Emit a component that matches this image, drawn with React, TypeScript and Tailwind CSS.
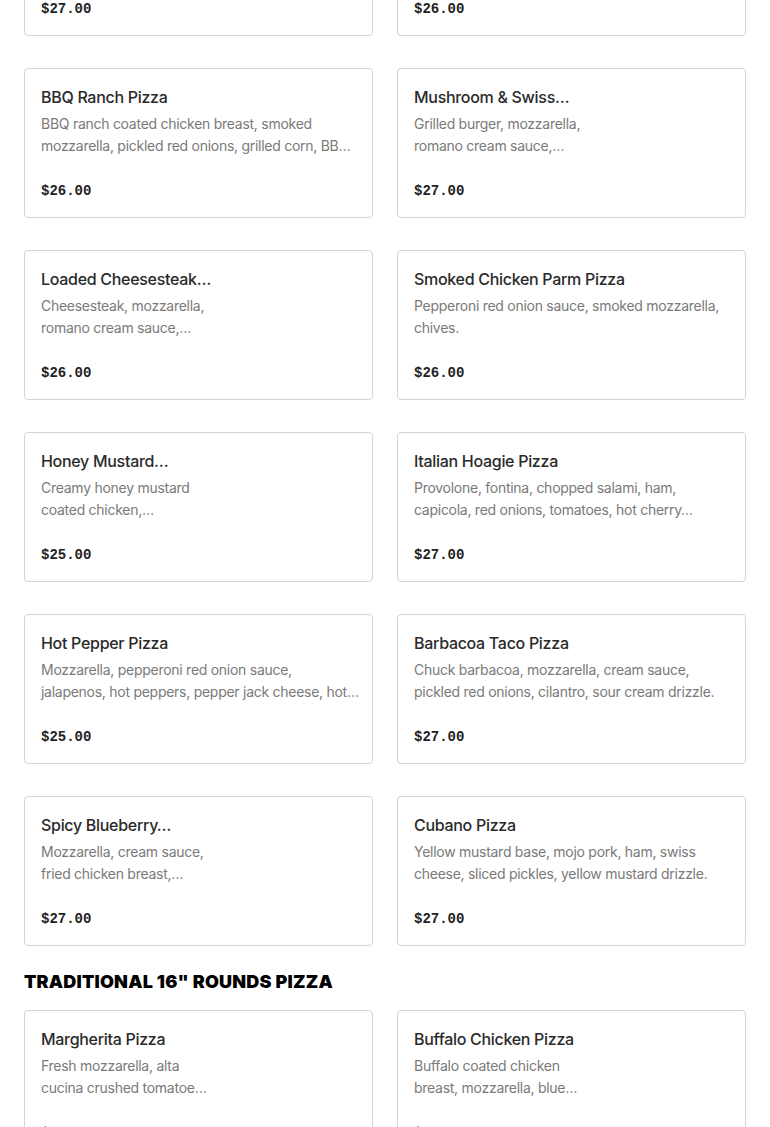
import React from "react";

type Item = { title: string; lines: string[]; price: string };

const rows: [Item, Item][] = [
  [
    { title: "Placeholder", lines: ["", ""], price: "$27.00" },
    { title: "Placeholder", lines: ["", ""], price: "$26.00" },
  ],
  [
    {
      title: "BBQ Ranch Pizza",
      lines: ["BBQ ranch coated chicken breast, smoked", "mozzarella, pickled red onions, grilled corn, BB…"],
      price: "$26.00",
    },
    {
      title: "Mushroom & Swiss…",
      lines: ["Grilled burger, mozzarella,", "romano cream sauce,…"],
      price: "$27.00",
    },
  ],
  [
    {
      title: "Loaded Cheesesteak…",
      lines: ["Cheesesteak, mozzarella,", "romano cream sauce,…"],
      price: "$26.00",
    },
    {
      title: "Smoked Chicken Parm Pizza",
      lines: ["Pepperoni red onion sauce, smoked mozzarella,", "chives."],
      price: "$26.00",
    },
  ],
  [
    {
      title: "Honey Mustard…",
      lines: ["Creamy honey mustard", "coated chicken,…"],
      price: "$25.00",
    },
    {
      title: "Italian Hoagie Pizza",
      lines: ["Provolone, fontina, chopped salami, ham,", "capicola, red onions, tomatoes, hot cherry…"],
      price: "$27.00",
    },
  ],
  [
    {
      title: "Hot Pepper Pizza",
      lines: ["Mozzarella, pepperoni red onion sauce,", "jalapenos, hot peppers, pepper jack cheese, hot…"],
      price: "$25.00",
    },
    {
      title: "Barbacoa Taco Pizza",
      lines: ["Chuck barbacoa, mozzarella, cream sauce,", "pickled red onions, cilantro, sour cream drizzle."],
      price: "$27.00",
    },
  ],
  [
    {
      title: "Spicy Blueberry…",
      lines: ["Mozzarella, cream sauce,", "fried chicken breast,…"],
      price: "$27.00",
    },
    {
      title: "Cubano Pizza",
      lines: ["Yellow mustard base, mojo pork, ham, swiss", "cheese, sliced pickles, yellow mustard drizzle."],
      price: "$27.00",
    },
  ],
];

const traditional: Item[] = [
  {
    title: "Margherita Pizza",
    lines: ["Fresh mozzarella, alta", "cucina crushed tomatoe…"],
    price: "$24.00",
  },
  {
    title: "Buffalo Chicken Pizza",
    lines: ["Buffalo coated chicken", "breast, mozzarella, blue…"],
    price: "$26.00",
  },
];

function Card({ item, hidden }: { item: Item; hidden?: boolean }) {
  return (
    <div className="border border-[#d4d4d4] rounded-[4px] bg-white px-4 pt-4 pb-[15px]">
      <div
        className={`text-[16px] leading-[24px] font-medium text-[#2a2a2a] tracking-[-0.3px] whitespace-nowrap ${hidden ? "invisible" : ""}`}
        style={{ fontFamily: "Inter, 'Noto Sans', sans-serif" }}
      >
        {item.title}
      </div>
      <div
        className={`mt-1 text-[14px] leading-[22px] text-[#7a7a7a] tracking-[-0.27px] ${hidden ? "invisible" : ""}`}
        style={{ fontFamily: "Inter, 'Noto Sans', sans-serif" }}
      >
        {item.lines.map((l, i) => (
          <div key={i} className="whitespace-nowrap h-[22px]">
            {l}
          </div>
        ))}
      </div>
      <div
        className="mt-[23px] text-[14px] leading-[22px] font-bold text-[#222222]"
        style={{ fontFamily: "'Liberation Mono', monospace" }}
      >
        {item.price}
      </div>
    </div>
  );
}

export default function App() {
  return (
    <div className="w-[770px] h-[1127px] overflow-hidden bg-white">
      <div className="px-6 mt-[-114px]">
        <div className="grid grid-cols-2 gap-x-6 gap-y-8">
          {rows.map((r, i) => (
            <React.Fragment key={i}>
              <Card item={r[0]} hidden={i === 0} />
              <Card item={r[1]} hidden={i === 0} />
            </React.Fragment>
          ))}
        </div>
        <h2
          className="mt-[21px] mb-[13px] text-[18px] leading-[30px] font-black text-black tracking-[0.2px]"
          style={{ fontFamily: "Inter, 'DejaVu Sans', sans-serif" }}
        >
          TRADITIONAL 16" ROUNDS PIZZA
        </h2>
        <div className="grid grid-cols-2 gap-x-6 gap-y-8">
          {traditional.map((t, i) => (
            <Card key={i} item={t} />
          ))}
        </div>
      </div>
    </div>
  );
}
